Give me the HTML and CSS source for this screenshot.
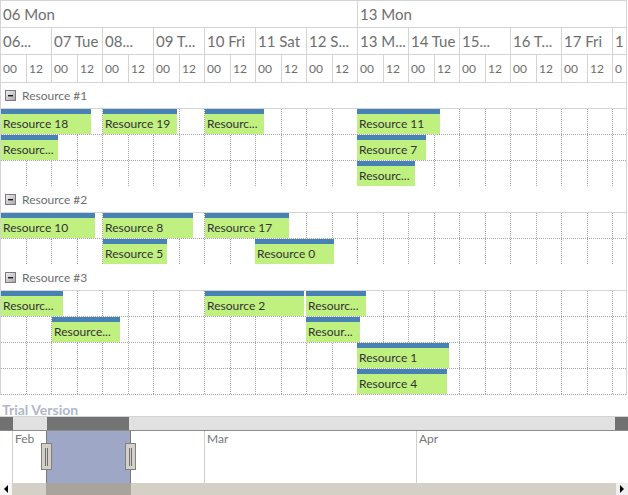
FILE: index.html
```html
<!DOCTYPE html>
<html>
<head>
<meta charset="utf-8">
<link rel="stylesheet" href="styles.css">
</head>
<body>
<div class="gantt">
  <div class="timeline">
    <div class="hdr hdr-week">
      <div class="c">06 Mon</div>
      <div class="c last">13 Mon</div>
    </div>
    <div class="hdr hdr-day">
      <div class="c">06...</div><div class="c">07 Tue</div><div class="c">08...</div><div class="c">09 T...</div><div class="c">10 Fri</div><div class="c">11 Sat</div><div class="c">12 S...</div><div class="c">13 M...</div><div class="c">14 Tue</div><div class="c">15...</div><div class="c">16 T...</div><div class="c">17 Fri</div><div class="c">1</div>
    </div>
    <div class="hdr hdr-hour">
      <div class="c">00</div><div class="c">12</div><div class="c">00</div><div class="c">12</div><div class="c">00</div><div class="c">12</div><div class="c">00</div><div class="c">12</div><div class="c">00</div><div class="c">12</div><div class="c">00</div><div class="c">12</div><div class="c">00</div><div class="c">12</div><div class="c">00</div><div class="c">12</div><div class="c">00</div><div class="c">12</div><div class="c">00</div><div class="c">12</div><div class="c">00</div><div class="c">12</div><div class="c">00</div><div class="c">12</div><div class="c">0</div>
    </div>

    <div class="group">
      <div class="group-head"><svg class="toggle" width="11" height="11" viewBox="0 0 11 11"><defs><linearGradient id="tg" x1="0" y1="0" x2="1" y2="1"><stop offset="0" stop-color="#f4f4f4"/><stop offset="1" stop-color="#a4a4a4"/></linearGradient></defs><rect x="0.5" y="0.5" width="10" height="10" fill="url(#tg)" stroke="#7d7785"/><rect x="3" y="5" width="5" height="1.4" fill="#1a1a1a"/></svg><span>Resource #1</span></div>
      <div class="lane">
        <div class="ev" style="left:0;width:90px">Resource 18</div>
        <div class="ev" style="left:102px;width:74px">Resource 19</div>
        <div class="ev" style="left:204px;width:59px">Resourc...</div>
        <div class="ev" style="left:356px;width:83px">Resource 11</div>
      </div>
      <div class="lane">
        <div class="ev" style="left:0;width:57px">Resourc...</div>
        <div class="ev" style="left:356px;width:69px">Resource 7</div>
      </div>
      <div class="lane">
        <div class="ev" style="left:356px;width:58px">Resourc...</div>
      </div>
    </div>

    <div class="group">
      <div class="group-head"><svg class="toggle" width="11" height="11" viewBox="0 0 11 11"><rect x="0.5" y="0.5" width="10" height="10" fill="url(#tg)" stroke="#7d7785"/><rect x="3" y="5" width="5" height="1.4" fill="#1a1a1a"/></svg><span>Resource #2</span></div>
      <div class="lane">
        <div class="ev" style="left:0;width:94px">Resource 10</div>
        <div class="ev" style="left:102px;width:90px">Resource 8</div>
        <div class="ev" style="left:204px;width:84px">Resource 17</div>
      </div>
      <div class="lane">
        <div class="ev" style="left:102px;width:64px">Resource 5</div>
        <div class="ev" style="left:254px;width:79px">Resource 0</div>
      </div>
    </div>

    <div class="group">
      <div class="group-head"><svg class="toggle" width="11" height="11" viewBox="0 0 11 11"><rect x="0.5" y="0.5" width="10" height="10" fill="url(#tg)" stroke="#7d7785"/><rect x="3" y="5" width="5" height="1.4" fill="#1a1a1a"/></svg><span>Resource #3</span></div>
      <div class="lane">
        <div class="ev" style="left:0;width:62px">Resourc...</div>
        <div class="ev" style="left:204px;width:99px">Resource 2</div>
        <div class="ev" style="left:305px;width:60px">Resourc...</div>
      </div>
      <div class="lane">
        <div class="ev" style="left:51px;width:68px">Resource...</div>
        <div class="ev" style="left:305px;width:54px">Resour...</div>
      </div>
      <div class="lane">
        <div class="ev" style="left:356px;width:92px">Resource 1</div>
      </div>
      <div class="lane">
        <div class="ev" style="left:356px;width:90px">Resource 4</div>
      </div>
    </div>
  </div>

  <div class="trial">Trial Version</div>

  <div class="hscroll">
    <div class="hs-cap"></div>
    <div class="hs-thumb"></div>
    <div class="hs-cap hs-end"></div>
  </div>

  <div class="overview">
    <div class="ov-pad"></div>
    <div class="month m-feb">Feb</div>
    <div class="month m-mar">Mar</div>
    <div class="month m-apr">Apr</div>
    <div class="sel"></div>
    <div class="handle h-left"><div class="grip"></div></div>
    <div class="handle h-right"><div class="grip"></div></div>
  </div>

  <div class="bscroll">
    <div class="bs-cap"><span class="tri-left"></span></div>
    <div class="bs-thumb"></div>
    <div class="bs-cap bs-end"><span class="tri-right"></span></div>
  </div>
</div>
</body>
</html>
```
FILE: styles.css
```css
* { box-sizing: border-box; }

body {
  margin: 0;
  width: 628px;
  height: 495px;
  overflow: hidden;
  background: #fff;
  font-family: Lato, "Open Sans", "DejaVu Sans", sans-serif;
}

.gantt {
  display: flex;
  flex-direction: column;
  width: 628px;
}

.timeline {
  width: 627px;
  height: 395px;
  border: 1px solid #d4d4d4;
  border-bottom: none;
  overflow: hidden;
}

.hdr {
  display: grid;
  border-bottom: 1px solid #d4d4d4;
  color: #6e6e6e;
}

.hdr .c {
  border-right: 1px solid #d4d4d4;
  white-space: nowrap;
  overflow: hidden;
  display: flex;
  align-items: center;
  padding-left: 2px;
}

.hdr .c.last { border-right: none; }

.hdr-week {
  height: 27px;
  grid-template-columns: 357px 1fr;
  font-size: 15px;
}

.hdr-day {
  height: 27px;
  grid-template-columns: repeat(13, 51px);
  font-size: 15px;
}

.hdr-hour {
  height: 28px;
  grid-template-columns: repeat(13, 26px 25px);
  font-size: 12px;
}

.group-head {
  height: 26px;
  border-bottom: 1px solid #d4d4d4;
  display: flex;
  align-items: center;
  gap: 6px;
  padding-left: 4px;
  font-size: 12px;
  color: #6e6e6e;
}

.toggle { display: block; flex: none; }

.lane {
  position: relative;
  height: 26px;
  border-bottom: 1px dotted #a4a4a4;
  background-image:
    repeating-linear-gradient(to bottom, transparent 0 1px, #fff 1px 2px),
    linear-gradient(to right, transparent 0 25px, #a4a4a4 25px 26px, transparent 26px 50px, #a4a4a4 50px 51px);
  background-size: auto, 51px 100%;
  background-repeat: repeat, repeat-x;
}

.group .lane:last-child { border-bottom-color: transparent; }
.group:last-child .lane:last-child { border-bottom-color: #a4a4a4; }

.ev {
  position: absolute;
  top: 0;
  height: 25px;
  background: #c0f080;
  border-top: 5px solid #4682b4;
  font-size: 12px;
  line-height: 20px;
  color: #333;
  padding-left: 2px;
  white-space: nowrap;
  overflow: hidden;
}

.trial {
  height: 21px;
  padding: 8px 0 0 2px;
  font-size: 14px;
  font-weight: bold;
  line-height: 13px;
  color: #b0b8c8;
}

.hscroll {
  height: 14px;
  display: flex;
  background: #e1e1e1;
  border-top: 1px solid #d4d4d4;
}

.hs-cap { width: 13px; background: #717171; }
.hs-end { margin-left: auto; }
.hs-thumb { margin-left: 34px; width: 82px; background: #737373; }

.overview {
  position: relative;
  height: 53px;
  display: flex;
  border-top: 1px solid #8c8c8c;
  font-size: 12px;
  color: #777;
}

.ov-pad { width: 12px; }

.month {
  border-left: 1px solid #d0d0d0;
  padding: 1px 0 0 2px;
  line-height: 14px;
}
.m-feb { width: 192px; }
.m-mar { width: 212px; }
.m-apr { flex: 1; }

.sel {
  position: absolute;
  left: 46px;
  top: 0;
  bottom: 0;
  width: 85px;
  background: #9ea8c6;
  border-left: 1px solid #7a7a7a;
  border-right: 1px solid #7a7a7a;
}

.handle {
  position: absolute;
  top: 12px;
  width: 11px;
  height: 27px;
  background: #d4d0c8;
  border: 1px solid #808080;
}
.h-left { left: 41px; }
.h-right { left: 125px; }

.grip {
  position: absolute;
  left: 3px;
  top: 4px;
  width: 3px;
  height: 18px;
  border-left: 1px solid #6e6e6e;
  border-right: 1px solid #6e6e6e;
}

.bscroll {
  height: 12px;
  display: flex;
  background: #d4d0c8;
}

.bs-cap {
  width: 12px;
  background: #f6f6f6;
  display: flex;
  align-items: center;
  justify-content: center;
}
.bs-end { margin-left: auto; background: #f0f0f0; }
.bs-thumb { margin-left: 34px; width: 85px; background: #a8a49c; }

.tri-left {
  width: 0; height: 0;
  border-top: 4px solid transparent;
  border-bottom: 4px solid transparent;
  border-right: 4px solid #000;
}
.tri-right {
  width: 0; height: 0;
  border-top: 4px solid transparent;
  border-bottom: 4px solid transparent;
  border-left: 4px solid #000;
}
```
